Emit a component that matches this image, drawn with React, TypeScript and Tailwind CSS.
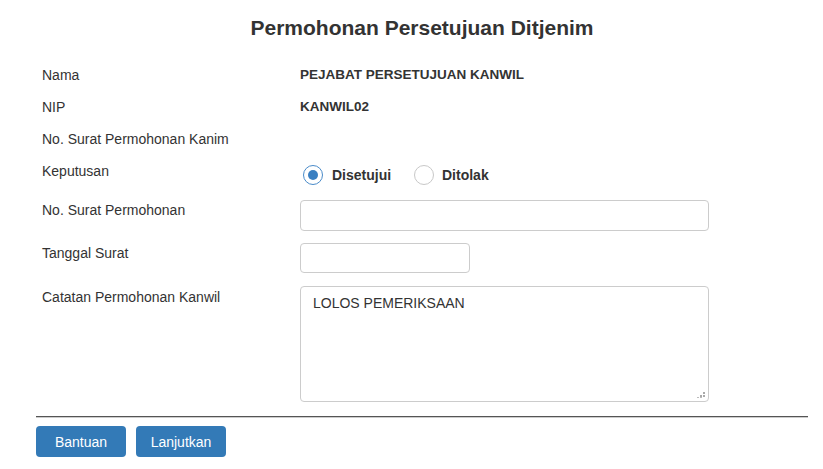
import React from "react";

export default function App() {
  return (
    <div className="w-[823px] h-[469px] bg-white text-[#333] text-[14px] leading-[20px] overflow-hidden" style={{ fontFamily: '"Liberation Sans", Arial, sans-serif' }}>
      <div className="ml-[36px] w-[772px]">
        <h1 className="text-center font-bold text-[21px] leading-[24px] pt-[16px] h-[65px]">Permohonan Persetujuan Ditjenim</h1>
        <div className="pl-[6px] flex flex-col">
          <div className="flex h-[32px]">
            <div className="w-[258px]">Nama</div>
            <div className="font-bold text-[13.5px]">PEJABAT PERSETUJUAN KANWIL</div>
          </div>
          <div className="flex h-[32px]">
            <div className="w-[258px]">NIP</div>
            <div className="font-bold text-[13.5px]">KANWIL02</div>
          </div>
          <div className="flex h-[32px]">
            <div className="w-[258px]">No. Surat Permohonan Kanim</div>
            <div></div>
          </div>
          <div className="flex h-[39px]">
            <div className="w-[258px]">Keputusan</div>
            <div className="flex items-center pt-[4px] pl-[3px] h-[24px] font-bold">
              <label className="flex items-center gap-[9px] mr-[21px]">
                <span className="w-[20px] h-[20px] rounded-full border border-[#4a8bc9] flex items-center justify-center">
                  <span className="w-[10px] h-[10px] rounded-full bg-[#3a7fc1]"></span>
                </span>
                <span className="w-[61px]">Disetujui</span>
              </label>
              <label className="flex items-center gap-[8px]">
                <span className="w-[20px] h-[20px] rounded-full border border-[#c8c8c8] bg-white"></span>
                Ditolak
              </label>
            </div>
          </div>
          <div className="flex h-[43px]">
            <div className="w-[258px]">No. Surat Permohonan</div>
            <div className="w-[409px] h-[31px] border border-[#ccc] rounded-[4px]"></div>
          </div>
          <div className="flex h-[43px]">
            <div className="w-[258px]">Tanggal Surat</div>
            <div className="w-[170px] h-[30px] border border-[#ccc] rounded-[4px]"></div>
          </div>
          <div className="flex h-[116px]">
            <div className="w-[258px] pt-[1px]">Catatan Permohonan Kanwil</div>
            <div className="relative w-[409px] h-[116px] border border-[#ccc] rounded-[4px] px-[12px] py-[6px]">
              LOLOS PEMERIKSAAN
              <svg className="absolute right-[2px] bottom-[2px]" width="9" height="9" viewBox="0 0 9 9">
                <rect x="6" y="2" width="2" height="2" fill="#aaa" />
                <rect x="3" y="5" width="2" height="2" fill="#aaa" />
                <rect x="6" y="5" width="2" height="2" fill="#aaa" />
                <rect x="0" y="7" width="2" height="1" fill="#bbb" />
                <rect x="3" y="7" width="2" height="1" fill="#bbb" />
              </svg>
            </div>
          </div>
        </div>
        <div className="mt-[14px] h-[2px] bg-[#555] border-b border-[#ccc]"></div>
        <div className="flex gap-[10px] mt-[8px]">
          <button className="w-[90px] h-[31px] rounded-[4px] bg-[#337ab7] text-white text-[14px]">Bantuan</button>
          <button className="w-[90px] h-[31px] rounded-[4px] bg-[#337ab7] text-white text-[14px]">Lanjutkan</button>
        </div>
      </div>
    </div>
  );
}
